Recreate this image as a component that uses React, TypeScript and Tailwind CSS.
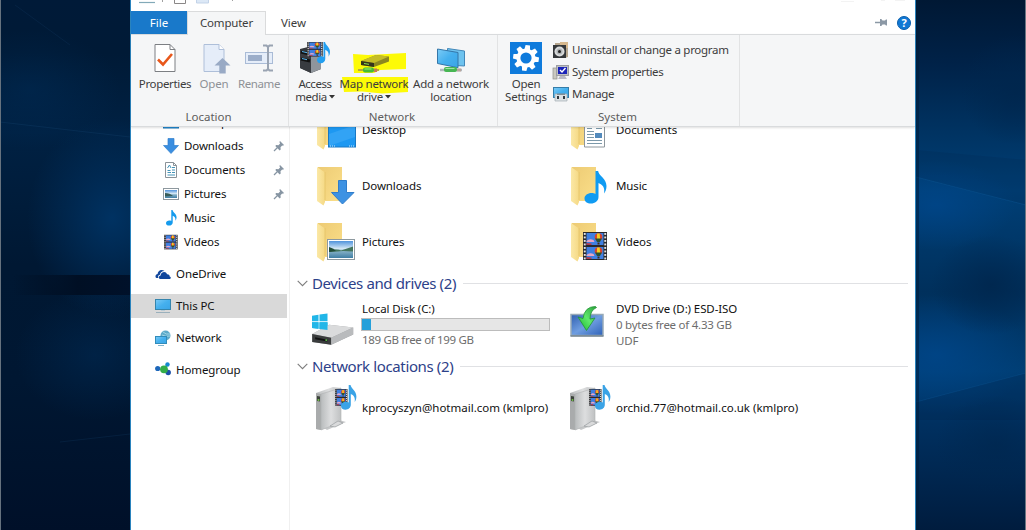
import React, { ReactNode } from "react";

/* ---------- wallpaper ---------- */

function LeftWallpaper() {
  return (
    <svg className="block h-[530px] w-[130px] shrink-0" viewBox="0 0 130 530" preserveAspectRatio="none">
      <defs>
        <linearGradient id="lw" x1="0" y1="0" x2="0" y2="1">
          <stop offset="0" stopColor="#001a38" />
          <stop offset="0.1" stopColor="#001a36" />
          <stop offset="0.25" stopColor="#002143" />
          <stop offset="0.5" stopColor="#001833" />
          <stop offset="0.72" stopColor="#001732" />
          <stop offset="1" stopColor="#001029" />
        </linearGradient>
        <radialGradient id="lglow" cx="0.5" cy="0.5" r="0.5">
          <stop offset="0" stopColor="#003262" />
          <stop offset="1" stopColor="#003262" stopOpacity="0" />
        </radialGradient>
        <linearGradient id="lband" x1="0" x2="1" y1="0" y2="0">
          <stop offset="0.1" stopColor="#000d20" stopOpacity="0" />
          <stop offset="0.6" stopColor="#000f24" />
          <stop offset="1" stopColor="#00112a" />
        </linearGradient>
      </defs>
      <rect width="130" height="530" fill="url(#lw)" />
      <ellipse cx="112" cy="218" rx="85" ry="100" fill="url(#lglow)" />
      <ellipse cx="95" cy="355" rx="80" ry="65" fill="url(#lglow)" opacity="0.4" />
      <ellipse cx="30" cy="90" rx="90" ry="60" fill="url(#lglow)" opacity="0.35" />
      <rect y="275" width="130" height="20" fill="url(#lband)" />
      <path d="M0 122L130 137" stroke="#0b345c" strokeWidth="1" opacity="0.6" />
      <path d="M15 5L70 45" stroke="#0b2c50" opacity="0.5" />
      <path d="M60 442L130 434" stroke="#0a2b4d" opacity="0.5" />
      <rect width="1" height="530" fill="#66727e" />
    </svg>
  );
}

function RightWallpaper() {
  return (
    <svg className="block h-[530px] w-[110px] shrink-0" viewBox="0 0 110 530" preserveAspectRatio="none">
      <defs>
        <linearGradient id="rw" x1="0" y1="0" x2="0" y2="1">
          <stop offset="0" stopColor="#001834" />
          <stop offset="0.12" stopColor="#002248" />
          <stop offset="0.25" stopColor="#003362" />
          <stop offset="0.36" stopColor="#003f76" />
          <stop offset="0.55" stopColor="#00305c" />
          <stop offset="0.7" stopColor="#003e74" />
          <stop offset="0.8" stopColor="#003060" />
          <stop offset="1" stopColor="#001c3e" />
        </linearGradient>
        <radialGradient id="rglow" cx="0.5" cy="0.5" r="0.5">
          <stop offset="0" stopColor="#00468a" stopOpacity="0.8" />
          <stop offset="1" stopColor="#00468a" stopOpacity="0" />
        </radialGradient>
        <radialGradient id="rdark" cx="0.5" cy="0.5" r="0.5">
          <stop offset="0" stopColor="#00264d" stopOpacity="0.85" />
          <stop offset="1" stopColor="#00264d" stopOpacity="0" />
        </radialGradient>
      </defs>
      <rect width="110" height="530" fill="url(#rw)" />
      <ellipse cx="20" cy="205" rx="80" ry="45" fill="url(#rglow)" />
      <ellipse cx="20" cy="355" rx="95" ry="60" fill="url(#rglow)" />
      <ellipse cx="100" cy="90" rx="55" ry="55" fill="url(#rdark)" />
      <ellipse cx="75" cy="285" rx="60" ry="50" fill="url(#rdark)" />
      <ellipse cx="80" cy="445" rx="60" ry="50" fill="url(#rdark)" opacity="0.7" />
      <path d="M0 177L110 205" stroke="#0c5592" opacity="0.55" />
      <path d="M0 402L110 373" stroke="#0c5592" opacity="0.45" />
      <path d="M0 177L0 150L110 160V205Z" fill="#001f42" opacity="0.15" />
      <path d="M0 402L110 373V420H0Z" fill="#001f42" opacity="0.2" />
      <rect width="3" height="530" fill="#001c38" opacity="0.5" />
      <rect x="109" width="1" height="530" fill="#6b7683" />
    </svg>
  );
}

/* ---------- shared drawing parts ---------- */

function Defs() {
  return (
    <svg className="absolute h-0 w-0" aria-hidden="true">
      <defs>
        <linearGradient id="folderFront" x1="0" y1="0" x2="1" y2="0">
          <stop offset="0" stopColor="#fbe8a6" />
          <stop offset="1" stopColor="#f5d985" />
        </linearGradient>
        <linearGradient id="folderBack" x1="0" y1="0" x2="1" y2="1">
          <stop offset="0" stopColor="#edcb74" />
          <stop offset="1" stopColor="#fbdf8a" />
        </linearGradient>
        <linearGradient id="screen" x1="0" y1="0" x2="1" y2="1">
          <stop offset="0" stopColor="#7ccbf6" />
          <stop offset="0.5" stopColor="#45b0ee" />
          <stop offset="1" stopColor="#3aa4e6" />
        </linearGradient>
        <linearGradient id="metal" x1="0" y1="0" x2="1" y2="0">
          <stop offset="0" stopColor="#b9bcbd" />
          <stop offset="0.5" stopColor="#dddedf" />
          <stop offset="1" stopColor="#bfc1c2" />
        </linearGradient>
        <linearGradient id="sky" x1="0" y1="0" x2="0" y2="1">
          <stop offset="0" stopColor="#4f93dc" />
          <stop offset="0.45" stopColor="#d5e8f5" />
          <stop offset="0.6" stopColor="#84b0c6" />
          <stop offset="1" stopColor="#3f7ea4" />
        </linearGradient>
        <linearGradient id="dvd" x1="0" y1="0" x2="1" y2="1">
          <stop offset="0" stopColor="#2f5fb0" />
          <stop offset="0.5" stopColor="#6e9de0" />
          <stop offset="1" stopColor="#2f62b8" />
        </linearGradient>
        <linearGradient id="green" x1="1" y1="0" x2="0" y2="1">
          <stop offset="0" stopColor="#2a9e3a" />
          <stop offset="0.5" stopColor="#5ee86a" />
          <stop offset="1" stopColor="#14b32c" />
        </linearGradient>
      </defs>
    </svg>
  );
}

/* Film strip, 24 x 28 units */
function Film() {
  const holes = [1, 4.5, 8, 11.5, 15, 18.5, 22, 25.5];
  return (
    <g>
      <rect width="24" height="28" fill="#29292c" />
      {holes.map((y) => (
        <g key={y} fill="#e4e4e4">
          <rect x="0.8" y={y} width="1.9" height="1.9" />
          <rect x="21.3" y={y} width="1.9" height="1.9" />
        </g>
      ))}
      {[1, 15].map((y) => (
        <g key={y} transform={`translate(3.5 ${y})`}>
          <rect width="17" height="12" fill="#3f7fe0" />
          <path d="M0 8q3-3 7-1l1 2H0z" fill="#e9a6c4" />
          <path d="M0 12V10l5 .5V12z" fill="#b43c4c" />
          <ellipse cx="12" cy="4" rx="3.800" ry="3.800" fill="#d8452c" />
          <path d="M10.600.5h2.600L13.800 8h-3.400z" fill="#f3d021" />
          <path d="M8.600 5.500h6.800l-2 3.500h-2.800z" fill="#2b5132" />
          <rect x="11" y="9.500" width="2" height="2" fill="#4b2a16" />
        </g>
      ))}
    </g>
  );
}

/* Eighth note, 22 x 33 units */
const NOTE =
  "M11 0h2.6c.8 5 8.4 7.500 8.400 15 0 3-1 5.500-2.500 7.500 1.200-6-1.500-9-5.500-10.500v14c0 4-3.600 6.500-7.500 6.500S0 30.600 0 27.500 3.200 22 7 22c1.500 0 3 .3 4 .9z";

/* ---------- ribbon icons ---------- */

const PropertiesIcon = () => (
  <svg width="34" height="32" viewBox="0 0 34 32">
    <path d="M7 2.500h15l5 5v22H7z" fill="#fff" stroke="#7c7f83" />
    <path d="M22 2.500v5h5" fill="none" stroke="#7c7f83" />
    <path d="M10 17.500l5 5 9-10.500" fill="none" stroke="#e8571b" strokeWidth="2.600" />
  </svg>
);

const OpenIcon = () => (
  <svg width="34" height="32" viewBox="0 0 34 32">
    <path d="M7 2.500h15l5 5v22H7z" fill="#e5edf9" stroke="#aebfd9" />
    <path d="M22 2.500v5h5" fill="#fff" stroke="#aebfd9" />
    <path d="M25.500 16l8 7.500h-4.800V31.500h-6.400v-8h-4.800z" fill="#99aac5" />
  </svg>
);

const RenameIcon = () => (
  <svg width="34" height="32" viewBox="0 0 34 32">
    <rect x="3.500" y="10.500" width="27" height="11" fill="#e5edf9" stroke="#a9bbd6" />
    <rect x="6" y="13" width="14" height="6" fill="#9badc9" />
    <path d="M21 3.500h3.500l1.500 1.500 1.500-1.500H31M21 28.500h3.500l1.500-1.500 1.500 1.500H31M26 4.500v23" fill="none" stroke="#99a3b2" strokeWidth="2" />
  </svg>
);

const AccessMediaIcon = () => (
  <svg width="34" height="32" viewBox="0 0 34 32">
    <path d="M2 7L14 4l9 4v19l-10 4L2 26z" fill="#35383c" />
    <path d="M13 10l10-3v20l-10 4z" fill="#8f959c" />
    <path d="M2 7l11 3v21L2 26z" fill="#383b40" />
    <path d="M3 10l9 2M3 17l9 2" stroke="#111" strokeWidth="3" />
    <path d="M4 9.500l5 1.200M4 16.500l5 1.200" stroke="#58b7f1" strokeWidth="1" />
    <g transform="translate(9 0) scale(.66 .52)"><Film /></g>
    <path transform="translate(19 0) scale(.59 .65)" d={NOTE} fill="#229ff0" />
  </svg>
);

const MapDriveIcon = () => (
  <svg className="relative" width="54" height="32" viewBox="0 0 54 32">
    <g transform="translate(6 2)">
      <path d="M8 17l15-6 13 1.500v5L21 23 8 21z" fill="#8c8720" />
      <path d="M8 17l15-6 13 1.500-15 6.500z" fill="#c5bd26" />
      <path d="M8 17l13 2V23L8 21z" fill="#34351a" />
      <path d="M11 19.500l5 .8" stroke="#90e34c" />
      <path d="M5 26h21" stroke="#b7aa3a" strokeWidth="2" />
      <rect x="10" y="23.500" width="11" height="5" rx="2" fill="#46bb35" />
      <rect x="21" y="24.500" width="3" height="3.500" fill="#c77953" />
      <path d="M11.500 25h7" stroke="#a6ec70" />
    </g>
  </svg>
);

const AddLocationIcon = () => (
  <svg width="34" height="32" viewBox="0 0 34 32">
    <g transform="translate(0 1.500)">
      <path d="M13.500 5l17 2.500v15l-17-1z" fill="#6ec3ef" stroke="#4388b9" />
      <path d="M3.500 5.500l20.500 3.500v15.200L3.500 20z" fill="url(#screen)" stroke="#3576a8" />
      <path d="M6 26.500h22" stroke="#b1b8bd" strokeWidth="2.500" />
      <rect x="10" y="23.500" width="13" height="5" rx="2" fill="#47b653" />
      <rect x="23" y="25" width="4" height="3" fill="#b9a59d" />
      <path d="M11.500 25h9" stroke="#a2e4a4" />
    </g>
  </svg>
);

const SettingsIcon = () => (
  <svg width="32" height="32" viewBox="0 0 32 32">
    <rect width="32" height="32" fill="#0f7bdc" />
    <g transform="translate(16 16)" fill="#fff">
      {[0, 45, 90, 135, 180, 225, 270, 315].map((a) => (
        <path key={a} transform={`rotate(${a + 8})`} d="M-2.900-8l.7-4.900h4.400l.7 4.900z" />
      ))}
      <circle r="9.600" />
      <circle r="5.600" fill="#0f7bdc" />
    </g>
  </svg>
);

const UninstallIcon = () => (
  <svg width="18" height="18" viewBox="0 0 18 18">
    <path d="M3 2h13v14l-3 1V4H3z" fill="#b5a58d" />
    <path d="M8 1h8v6H8z" fill="#d6b78d" />
    <rect x="1" y="4" width="13" height="13" fill="#34373a" />
    <circle cx="7.500" cy="10.500" r="5" fill="#d8dadb" />
    <circle cx="7.500" cy="10.500" r="3" fill="#b0b4b6" />
    <circle cx="7.500" cy="10.500" r="1.500" fill="#222" />
  </svg>
);

const SystemPropsIcon = () => (
  <svg width="18" height="18" viewBox="0 0 18 18">
    <rect x="1" y="5" width="4" height="11" fill="#c9c8c0" stroke="#8f8f8a" strokeWidth=".7" />
    <rect x="4.500" y="2.500" width="12" height="10" fill="#bdbfc4" stroke="#9c9da2" />
    <rect x="6" y="4" width="9" height="7" fill="#1a23b8" />
    <path d="M8 7l2 2 3.500-4" fill="none" stroke="#fff" strokeWidth="1.400" />
    <path d="M8 13h5l2 3H6z" fill="#b9bac6" />
  </svg>
);

const ManageIcon = () => (
  <svg width="18" height="18" viewBox="0 0 18 18">
    <rect x="1.500" y="2.500" width="15" height="10" fill="url(#screen)" stroke="#347da9" />
    <path d="M3 9h12v7H3z" fill="#dce2e5" stroke="#a3acb1" strokeWidth=".7" />
    <path d="M5 9.200h8" stroke="#64737b" />
    <rect x="5" y="11" width="2" height="3" fill="#30383e" />
    <rect x="11" y="11" width="2" height="3" fill="#30383e" />
  </svg>
);

/* ---------- sidebar icons, 16 px ---------- */

function Small({ children }: { children: ReactNode }) {
  return (
    <svg className="shrink-0" width="16" height="16" viewBox="0 0 16 16">
      {children}
    </svg>
  );
}

const PinIcon = () => (
  <svg width="12" height="12" viewBox="0 0 12 12">
    <path d="M7 1l4 4-1 .8-.8-.2-1.700 1.700.2 2.200-1 .9L2.300 6l.9-1 2.200.2 1.700-1.700L6.400 2z" fill="#8795a3" />
    <path d="M4.500 7.500L1 11" stroke="#8795a3" strokeWidth="1.200" />
  </svg>
);

const smallIcons = {
  desktop: <Small><rect x=".5" y="2.500" width="15" height="11.500" fill="#2196e8" stroke="#1e78b6" /></Small>,
  downloads: <Small><path d="M5 .5h6v7h4.500L8 15.500.5 7.500H5z" fill="#3a8ee0" stroke="#3180cd" strokeWidth=".7" /></Small>,
  documents: (
    <Small>
      <path d="M2.500.5h8l3 3v12h-11z" fill="#fff" stroke="#8a9298" />
      <path d="M10.500.5v3h3" fill="none" stroke="#8a9298" />
      <path d="M4.500 6L6.500 3l1.500 3M4.500 8.500h3M9 5.500h3M9 8h3M4.500 10.500H8M9 10.500h3M4.500 13h7.500" fill="none" stroke="#4594b8" />
    </Small>
  ),
  pictures: (
    <Small>
      <rect x=".5" y="2.500" width="15" height="11" fill="#fff" stroke="#8e989e" />
      <rect x="2" y="4" width="12" height="8" fill="url(#sky)" />
      <path d="M2 7q5 0 8 3l-8 .5z" fill="#375d5a" />
    </Small>
  ),
  music: <Small><path transform="translate(3 0) scale(.48)" d={NOTE} fill="#159bed" /></Small>,
  videos: <Small><g transform="translate(1 .8) scale(.57 .52)"><Film /></g></Small>,
  onedrive: (
    <Small>
      <path d="M1.500 12C0 11.500 0 8.500 2.600 8 2.700 4.500 6.500 2.500 9.500 5 6.500 5 5 7 4.900 8.800 3 9 2.800 11 3.400 12z" fill="#11479d" />
      <path d="M5 13c-1.800-.5-1.600-3.300.6-3.500C5.700 5.700 11 4.500 12 8.200c2.200-.2 2.800 1.300 2.600 2.300 1.700.4 1.500 2.300.2 2.500z" fill="#11479d" />
    </Small>
  ),
  pc: (
    <Small>
      <rect x=".5" y="1.500" width="15" height="10" fill="url(#screen)" stroke="#3585ad" />
      <path d="M1 14.500h14" stroke="#9ab0bc" />
      <path d="M6 12.500h4" stroke="#b8cbd6" />
    </Small>
  ),
  network: (
    <Small>
      <circle cx="10.500" cy="5.500" r="5" fill="#5eaac9" />
      <path d="M8 2q3 3 7 2M7 5q4 2 8 1" stroke="#a2d6e6" fill="none" />
      <rect x=".5" y="6.500" width="11" height="7" fill="url(#screen)" stroke="#328cba" />
      <path d="M3 15.500h6" stroke="#82b4cc" />
    </Small>
  ),
  homegroup: (
    <Small>
      <path d="M9 7l3-4M9 7l4 4" fill="none" stroke="#43b7c8" strokeWidth="2" />
      <circle cx="2.700" cy="6.500" r="2.600" fill="#1d67ba" />
      <circle cx="12.500" cy="2.500" r="2.200" fill="#1688cf" />
      <circle cx="13.200" cy="10.500" r="2.700" fill="#1b50a9" />
      <circle cx="9" cy="7.300" r="3.900" fill="#33ad49" />
    </Small>
  ),
};

/* ---------- content icons, 48 px ---------- */

function Folder({ children }: { children: ReactNode }) {
  return (
    <svg className="shrink-0" width="48" height="48" viewBox="0 0 48 48">
      <path d="M9 5h24v34H9z" fill="url(#folderBack)" />
      <path d="M8 5l8 5.500V40l-1.500 3.500L8 39z" fill="url(#folderFront)" />
      <path d="M16 10v28" stroke="#e3c062" strokeWidth=".7" />
      {children}
    </svg>
  );
}

const folderArt = {
  desktop: (
    <g>
      <rect x="19.500" y="18.500" width="27" height="22.500" fill="#1d98f2" stroke="#1a79c4" />
      <path d="M20 40V28L46 19v12z" fill="#47adf7" opacity=".5" />
      <path d="M21 40h5M40 40h6" stroke="#c9e7fb" strokeDasharray="1 1" />
    </g>
  ),
  documents: (
    <g>
      <path d="M21.500 8.500h20v32.500h-20z" fill="#fff" stroke="#8d969c" />
      <path d="M24 22.500h5M24 25.500h7M24 28.500h7M24 31.500h7M24 34.500h15M24 37.500h15M33 22.500h6" stroke="#7c99aa" strokeWidth="1.100" />
      <path d="M24 21l2-4 3 4" fill="none" stroke="#349ac7" />
      <rect x="32" y="27" width="7" height="5" fill="#538abc" />
    </g>
  ),
  downloads: <path d="M29.500 18.500h8v12H45L33.500 42 22.500 30.500h7z" fill="#3d92e3" stroke="#2f7dcb" />,
  music: <path transform="translate(21.500 9)" d={NOTE} fill="#109bf2" />,
  pictures: (
    <g>
      <rect x="18.500" y="21.500" width="27" height="20" fill="#fff" stroke="#8d999f" />
      <rect x="20" y="23" width="24" height="17" fill="url(#sky)" />
      <path d="M20 31q9 0 12 1.500l9-3 3-1v5q-12-1-15 0l-9 .5z" fill="#43745d" />
      <path d="M20 29q4 1 7 4l-7 1z" fill="#224c38" />
    </g>
  ),
  videos: <g transform="translate(20 14)"><Film /></g>,
};

const DiskIcon = () => (
  <svg className="shrink-0" width="48" height="48" viewBox="0 0 48 48">
    <g fill="#21b6e8" transform="translate(-1 5)">
      <path d="M4 9.700l6.500-.9v6.500H4zM11.500 8.600L19.500 7.500v7.800h-8zM4 16.300h6.500v6.500L4 21.900zM11.500 16.300h8V24l-8-1z" />
    </g>
    <g transform="translate(-.8 7.500) scale(1 .93)">
      <path d="M4 27.500l17-10 24 3v7.500L23 39 4 36z" fill="#9fa1a3" />
      <path d="M4 27.500l17-10 24 3L23 31.500z" fill="#dadbdc" />
      <path d="M4 27.500l19 4V39L4 36z" fill="#3a3c3d" />
      <path d="M23 31.500l22-11V28L23 39z" fill="#b9bbbd" />
      <path d="M7 31l12 2.700v1.800L7 33z" fill="#101112" />
      <circle cx="18" cy="34" r=".9" fill="#63d24b" />
    </g>
    <g fill="#21b6e8" transform="translate(-1 5)">
      <path d="M4 16.300h6.500v6.500L4 21.900zM11.500 16.300h8V24l-8-1z" />
    </g>
  </svg>
);

const DvdIcon = () => (
  <svg className="shrink-0" width="48" height="48" viewBox="0 0 48 48">
    <g transform="translate(4.500 -.5)">
      <rect x="3.500" y="14" width="32" height="21" fill="url(#dvd)" stroke="#98aab8" strokeWidth="1.500" />
      <path d="M3 35.500h33" stroke="#74848f" strokeWidth="1.500" />
      <path d="M28 6q-11 0-12.500 12l-5-1.500L19 30l8.500-12.500-5 1Q22.500 10 29 7z" fill="url(#green)" stroke="#229336" strokeWidth=".8" />
    </g>
  </svg>
);

const ServerIcon = () => (
  <svg className="shrink-0" width="48" height="48" viewBox="0 0 48 48">
    <path d="M12 42l18-6 7 2-19 8z" fill="#c6c8c9" />
    <path d="M7 9L24 3l8 1v34L12 46l-5-1z" fill="url(#metal)" />
    <path d="M7 9l5 1v36l-5-1z" fill="#a9abac" />
    <path d="M8 12l3 .5v5L8 17z" fill="#3c423a" />
    <circle cx="9.500" cy="16" r="1" fill="#75c34a" />
    <path d="M12 10L32 4v34L12 46z" fill="url(#metal)" stroke="#b0b2b4" strokeWidth=".6" />
    <path d="M21 42l8-5 5 2-8 4z" stroke="#9a9da0" strokeWidth=".7" fill="#d9dadb" />
    <g transform="translate(26 5) scale(.52 .6)"><Film /></g>
    <path transform="translate(32 1) scale(.7 .76)" d={NOTE} fill="#3aa3e6" />
  </svg>
);

/* ---------- ribbon ---------- */

type ButtonProps = { icon: ReactNode; lines: ReactNode[]; width: string; dim?: boolean };

function RibbonButton({ icon, lines, width, dim }: ButtonProps) {
  return (
    <button className={`relative flex shrink-0 flex-col items-center whitespace-nowrap pt-[7px] ${width} ${dim ? "text-[#8e9196]" : "text-[#3c3c3c]"}`}>
      {icon}
      <span className="relative mt-[3px] flex flex-col items-center leading-[13px]">
        {lines.map((line, i) => (
          <span key={i}>{line}</span>
        ))}
      </span>
    </button>
  );
}

function RibbonGroup({ title, width, inset, children }: { title: string; width: string; inset: string; children: ReactNode }) {
  return (
    <section className={`relative flex h-[91px] shrink-0 flex-col border-r border-[#e2e3e4] ${width}`}>
      <div className={`flex h-[74px] ${inset}`}>{children}</div>
      <div className="pr-[2px] text-center leading-[16px] text-[#5d5d5d]">{title}</div>
    </section>
  );
}

const Caret = () => (
  <svg className="ml-[2px] inline-block align-[2px]" width="6" height="4" viewBox="0 0 6 4">
    <path d="M0 0h6L3 3.500z" fill="#333" />
  </svg>
);

const Highlighter = () => (
  <svg className="absolute left-0 top-0" width="74" height="74" viewBox="0 0 74 74">
    <path d="M16 19l15 1 38-2V34l-26 1-6 3H17z" fill="#fdfa07" />
    <path d="M5 42h66v15l-26 1.500-20-2-18 .5z" fill="#fdfa07" />
  </svg>
);

function Ribbon() {
  return (
    <div className="relative z-10 flex h-[93px] shrink-0 border-y border-[#d9dbdd] bg-[#f5f6f7] shadow-[0_1px_2px_rgba(0,0,0,0.13)]">
      <RibbonGroup title="Location" width="w-[158px]" inset="pl-2">
        <RibbonButton icon={<PropertiesIcon />} lines={["Properties"]} width="w-[52px] tracking-[-0.35px]" />
        <RibbonButton icon={<OpenIcon />} lines={["Open"]} width="w-[46px] tracking-[-0.2px]" dim />
        <RibbonButton icon={<RenameIcon />} lines={["Rename"]} width="w-[44px] tracking-[-0.4px]" dim />
      </RibbonGroup>
      <RibbonGroup title="Network" width="w-[209px]" inset="pl-1">
        <RibbonButton icon={<AccessMediaIcon />} lines={["Access", <>media<Caret /></>]} width="w-[44px] tracking-[-0.45px]" />
        <RibbonButton
          icon={<><Highlighter /><MapDriveIcon /></>}
          lines={["Map network", <>drive<Caret /></>]}
          width="w-[74px] tracking-[-0.25px]"
        />
        <RibbonButton icon={<AddLocationIcon />} lines={["Add a network", "location"]} width="w-[80px] tracking-[-0.2px]" />
      </RibbonGroup>
      <RibbonGroup title="System" width="w-[242px]" inset="pl-[5px]">
        <RibbonButton icon={<SettingsIcon />} lines={["Open", "Settings"]} width="w-[46px] tracking-[-0.25px]" />
        <ul className="ml-[3px] mt-[4px] whitespace-nowrap tracking-[-0.28px] text-[#3c3c3c]">
          <li className="flex h-[22px] items-center gap-[2px]"><UninstallIcon />Uninstall or change a program</li>
          <li className="flex h-[22px] items-center gap-[2px] tracking-[-0.4px]"><SystemPropsIcon />System properties</li>
          <li className="flex h-[22px] items-center gap-[2px]"><ManageIcon />Manage</li>
        </ul>
      </RibbonGroup>
    </div>
  );
}

function TitleRow() {
  return (
    <svg className="block h-[11px] w-[784px] shrink-0" viewBox="0 0 784 11">
      <path d="M8 2.500h16" stroke="#82a9b8" strokeWidth="1.200" />
      <path d="M31.500 0v2M101.500 0v1" stroke="#a0a0a0" />
      <path d="M43.500 0v3.500h11V0" fill="#fff" stroke="#8a8787" />
      <path d="M65.500 0v3h12V0" fill="#dce8f6" stroke="#c3d3e8" />
      <path d="M710 1.500h13M750 .5h4M764 .5h10" stroke="#f3f3f3" />
    </svg>
  );
}

function Tabs() {
  return (
    <div className="flex h-[23px] shrink-0 leading-[23px] text-[#3c3c3c]">
      <button className="w-[56px] bg-[#1979ca] text-white">File</button>
      <button className="relative z-20 -mb-px w-[79px] border border-b-0 border-[#dadbdc] bg-[#f5f6f7] pb-[2px] leading-[21px] tracking-[-0.2px]">Computer</button>
      <button className="w-[55px]">View</button>
      <div className="ml-auto flex items-center gap-[9px] pr-[4px]">
        <svg width="13" height="10" viewBox="0 0 13 10">
          <path d="M0 4.500h6" stroke="#8b98a5" strokeWidth="1.500" />
          <path d="M5 1h1.300l1.200 1.500H10L11 1.500h1v6h-1l-1-1H7.500L6.300 8H5z" fill="#8b98a5" />
        </svg>
        <svg width="14" height="14" viewBox="0 0 14 14">
          <circle cx="7" cy="7" r="6.500" fill="#1178d4" stroke="#0a5eab" />
          <text x="7" y="11" textAnchor="middle" fontSize="11" fontWeight="700" fill="#fff">?</text>
        </svg>
      </div>
    </div>
  );
}

/* ---------- navigation pane ---------- */

function NavRow({ icon, label, pinned, nested, active }: { icon: ReactNode; label: string; pinned?: boolean; nested?: boolean; active?: boolean }) {
  return (
    <li className={`flex h-[24px] shrink-0 items-center gap-[5px] pr-[2px] ${nested ? "pl-[32px]" : "pl-[24px]"} ${active ? "bg-[#d9d9d9]" : ""}`}>
      {icon}
      <span>{label}</span>
      {pinned && <span className="ml-auto"><PinIcon /></span>}
    </li>
  );
}

function Sidebar() {
  return (
    <nav className="w-[159px] shrink-0 border-r border-[#f0f0f0] pr-[2px] tracking-[-0.1px]">
      <ul className="-mt-[17px] flex flex-col">
        <NavRow icon={smallIcons.desktop} label="Desktop" nested />
        <NavRow icon={smallIcons.downloads} label="Downloads" nested pinned />
        <NavRow icon={smallIcons.documents} label="Documents" nested pinned />
        <NavRow icon={smallIcons.pictures} label="Pictures" nested pinned />
        <NavRow icon={smallIcons.music} label="Music" nested />
        <NavRow icon={smallIcons.videos} label="Videos" nested />
      </ul>
      <ul className="mt-[8px] flex flex-col gap-[8px]">
        <NavRow icon={smallIcons.onedrive} label="OneDrive" />
        <NavRow icon={smallIcons.pc} label="This PC" active />
        <NavRow icon={smallIcons.network} label="Network" />
        <NavRow icon={smallIcons.homegroup} label="Homegroup" />
      </ul>
    </nav>
  );
}

/* ---------- content pane ---------- */

function SectionHeading({ children }: { children: ReactNode }) {
  return (
    <h2 className="-ml-px flex h-[28px] items-center pl-[7px] pr-[7px] text-[15px] tracking-[-0.37px] text-[#2d4189]">
      <svg className="mr-[4px]" width="11" height="7" viewBox="0 0 11 7">
        <path d="M.7.8l4.800 4.800L10.300.8" fill="none" stroke="#7d7d7d" strokeWidth="1.100" />
      </svg>
      {children}
      <span className="ml-[7px] h-px flex-1 bg-[#e0e1e4]" />
    </h2>
  );
}

function Tile({ icon, children }: { icon: ReactNode; children: ReactNode }) {
  return (
    <div className="flex items-center gap-[5px] whitespace-nowrap">
      {icon}
      <div>{children}</div>
    </div>
  );
}

const folders: [keyof typeof folderArt, string][] = [
  ["desktop", "Desktop"],
  ["documents", "Documents"],
  ["downloads", "Downloads"],
  ["music", "Music"],
  ["pictures", "Pictures"],
  ["videos", "Videos"],
];

function Content() {
  return (
    <main className="min-w-0 flex-1 pl-px">
      <div className="-mt-[25px] grid auto-rows-[56px] grid-cols-[254px_254px] pl-[18px] tracking-[-0.1px]">
        {folders.map(([key, label]) => (
          <Tile key={key} icon={<Folder>{folderArt[key]}</Folder>}>{label}</Tile>
        ))}
      </div>
      <div className="-mt-px">
        <SectionHeading>Devices and drives (2)</SectionHeading>
        <div className="grid h-[55px] grid-cols-[254px_254px] pl-[18px] tracking-[-0.1px]">
          <Tile icon={<DiskIcon />}>
            <div className="leading-[16px]">Local Disk (C:)</div>
            <div className="-ml-px my-px h-[13px] w-[189px] border border-[#bcbcbc] bg-[#e6e6e6]">
              <div className="h-full w-[9px] bg-[#26a0da]" />
            </div>
            <div className="leading-[16px] tracking-[-0.32px] text-[#6d6d6d]">189 GB free of 199 GB</div>
          </Tile>
          <Tile icon={<DvdIcon />}>
            <div className="leading-[16px]">DVD Drive (D:) ESD-ISO</div>
            <div className="leading-[16px] tracking-[-0.25px] text-[#6d6d6d]">0 bytes free of 4.33 GB</div>
            <div className="leading-[16px] text-[#6d6d6d]">UDF</div>
          </Tile>
        </div>
        <SectionHeading>Network locations (2)</SectionHeading>
        <div className="grid h-[55px] grid-cols-[254px_254px] pl-[18px]">
          <Tile icon={<ServerIcon />}>kprocyszyn@hotmail.com (kmlpro)</Tile>
          <Tile icon={<ServerIcon />}>orchid.77@hotmail.co.uk (kmlpro)</Tile>
        </div>
      </div>
    </main>
  );
}

export default function App() {
  return (
    <div className="flex h-[530px] w-[1026px] overflow-hidden bg-[#001a36] font-['Noto_Sans','Open_Sans',sans-serif] text-[11.5px] text-[#111]">
      <Defs />
      <LeftWallpaper />
      <div className="flex w-[786px] shrink-0 flex-col border-x border-[#2a83bd] bg-white">
        <TitleRow />
        <Tabs />
        <Ribbon />
        <div className="flex min-h-0 flex-1 overflow-hidden">
          <Sidebar />
          <Content />
        </div>
      </div>
      <RightWallpaper />
    </div>
  );
}
